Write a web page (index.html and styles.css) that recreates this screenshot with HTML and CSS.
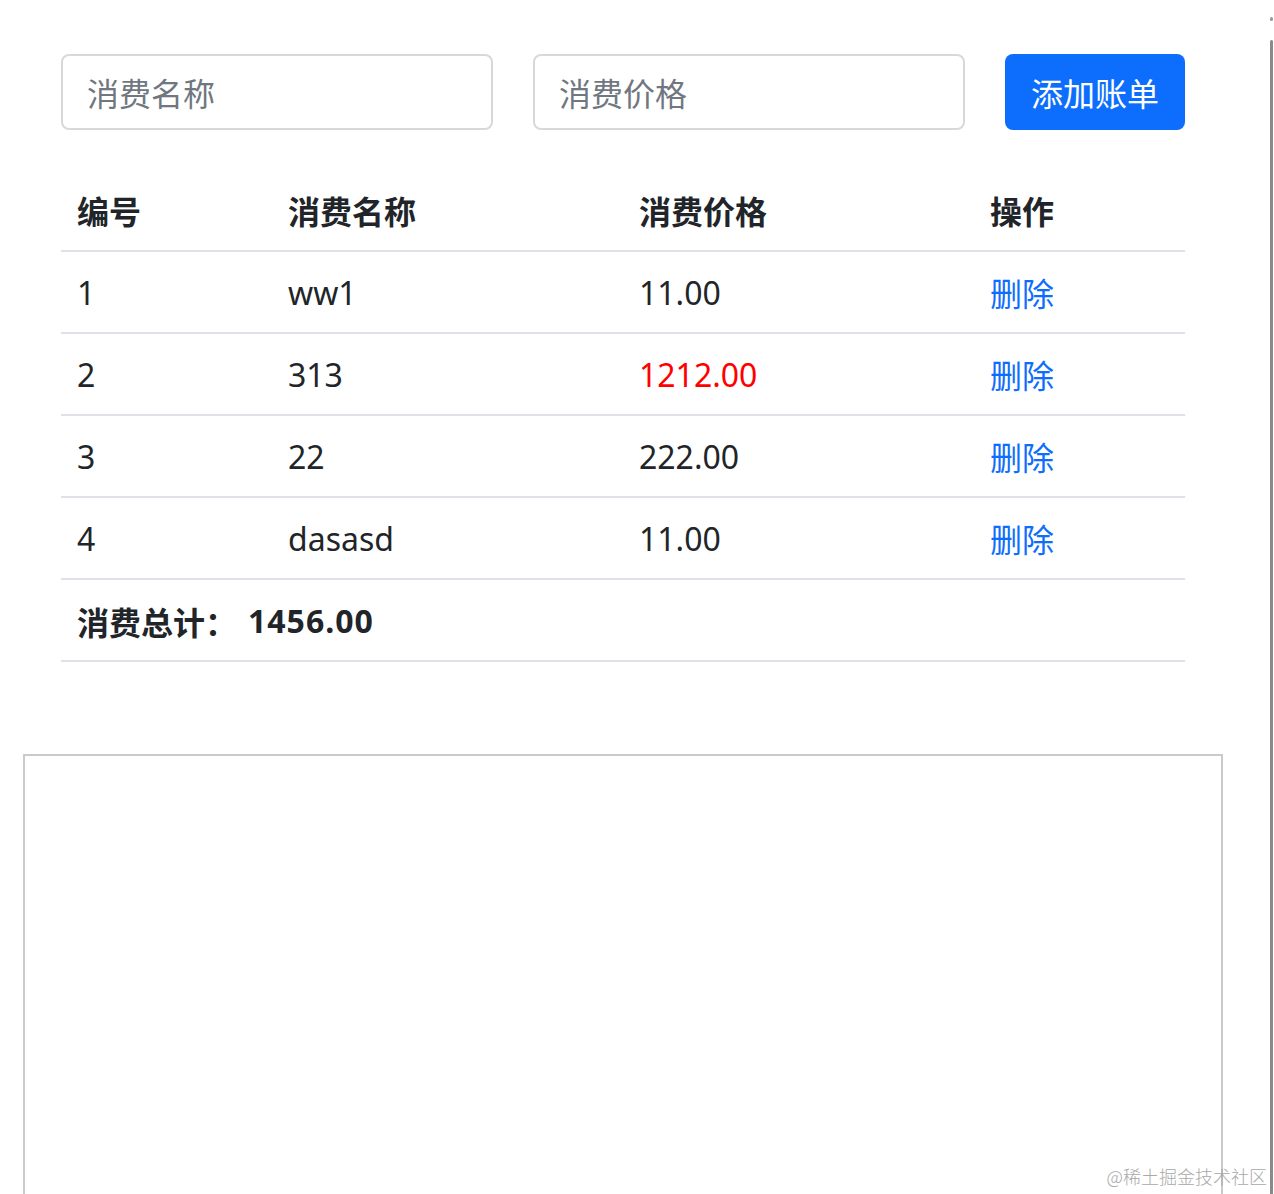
FILE: index.html
```html
<!DOCTYPE html>
<html lang="zh-CN">
<head>
<meta charset="utf-8">
<title>账单</title>
<link rel="stylesheet" href="styles.css">
</head>
<body>
<div class="app">
  <div class="form-row">
    <input class="field" type="text" placeholder="消费名称">
    <input class="field" type="text" placeholder="消费价格">
    <button class="btn-primary" type="button">添加账单</button>
  </div>
  <table class="bill-table">
    <colgroup>
      <col class="c1"><col class="c2"><col class="c3"><col class="c4">
    </colgroup>
    <thead>
      <tr><th>编号</th><th>消费名称</th><th>消费价格</th><th>操作</th></tr>
    </thead>
    <tbody>
      <tr><td>1</td><td>ww1</td><td>11.00</td><td><a class="del" href="#">删除</a></td></tr>
      <tr><td>2</td><td>313</td><td class="red">1212.00</td><td><a class="del" href="#">删除</a></td></tr>
      <tr><td>3</td><td>22</td><td>222.00</td><td><a class="del" href="#">删除</a></td></tr>
      <tr><td>4</td><td>dasasd</td><td>11.00</td><td><a class="del" href="#">删除</a></td></tr>
      <tr class="total"><td colspan="4"><span class="lbl">消费总计：</span><span class="sum">1456.00</span></td></tr>
    </tbody>
  </table>
</div>
<div class="frame"></div>
<div class="scroll-edge"><span class="scroll-dot"></span></div>
<div class="watermark">@稀土掘金技术社区</div>
</body>
</html>
```

FILE: styles.css
```css
html, body {
  margin: 0;
  padding: 0;
  background: #ffffff;
  height: 1194px;
  overflow: hidden;
}
body {
  font-family: "Noto Sans", "Noto Sans CJK SC", sans-serif;
  color: #212529;
  position: relative;
}
.app {
  width: 1124px;
  padding: 54px 0 0 61px;
}
.form-row {
  display: flex;
  gap: 40px;
}
.field {
  box-sizing: border-box;
  width: 432px;
  height: 76px;
  border: 2px solid #d6d9dc;
  border-radius: 8px;
  padding: 0 24px;
  font-family: "Noto Sans CJK SC", "Noto Sans", sans-serif;
  font-size: 32px;
  color: #212529;
  background: #fff;
  outline: none;
}
.field::placeholder {
  color: #707780;
}
.btn-primary {
  box-sizing: border-box;
  width: 180px;
  height: 76px;
  border: none;
  border-radius: 8px;
  background: #0d6efd;
  color: #ffffff;
  font-family: "Noto Sans CJK SC", sans-serif;
  font-size: 32px;
  padding: 0;
}
.bill-table {
  margin-top: 40px;
  width: 1124px;
  border-collapse: collapse;
  table-layout: fixed;
  font-size: 32px;
  line-height: 48px;
}
.c1 { width: 211px; }
.c2 { width: 351px; }
.c3 { width: 351px; }
.c4 { width: 211px; }
.bill-table th,
.bill-table td {
  padding: 16px 16px;
  text-align: left;
  border-bottom: 2px solid #dee2e6;
  vertical-align: middle;
}
.bill-table td {
  padding-top: 17px;
  padding-bottom: 15px;
}
.bill-table th {
  font-weight: 700;
  font-family: "Noto Sans CJK SC", sans-serif;
}
.red { color: #ff0000; }
.del {
  display: inline-block;
  vertical-align: top;
  line-height: 48px;
  margin-top: -1px;
  color: #0d6efd;
  text-decoration: none;
  font-family: "Noto Sans CJK SC", sans-serif;
}
.total td {
  font-weight: 700;
}
.lbl {
  display: inline-block;
  vertical-align: top;
  line-height: 48px;
  font-family: "Noto Sans CJK SC", sans-serif;
}
.sum {
  display: inline-block;
  vertical-align: top;
  line-height: 48px;
  font-family: "Noto Sans", sans-serif;
  margin-left: 11px;
  letter-spacing: 1px;
}
.frame {
  box-sizing: border-box;
  margin: 92px 0 0 23px;
  width: 1200px;
  height: 500px;
  border: 2px solid #cacaca;
}
.scroll-edge {
  position: absolute;
  right: 1px;
  top: 40px;
  width: 3px;
  height: 1160px;
  background: #8a8a8a;
  border-radius: 2px 2px 0 0;
}
.scroll-dot {
  position: absolute;
  left: 0;
  top: -23px;
  width: 3px;
  height: 4px;
  background: #9a9a9a;
  border-radius: 2px;
}
.watermark {
  position: absolute;
  right: 7px;
  bottom: 6px;
  font-family: "Noto Sans CJK SC", sans-serif;
  font-weight: 300;
  font-size: 18px;
  color: #a8a8a8;
  line-height: 24px;
}
```
